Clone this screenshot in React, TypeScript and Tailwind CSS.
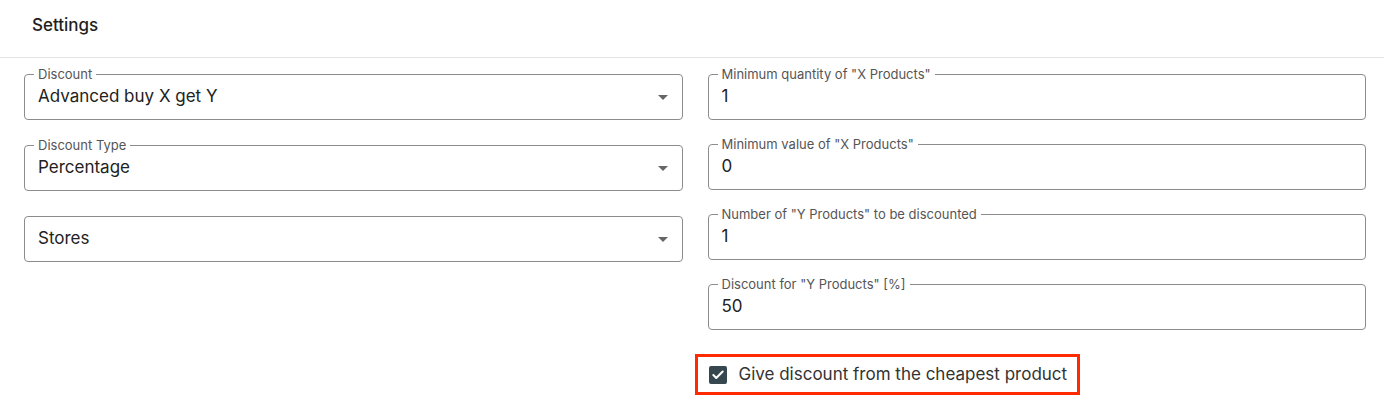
import { Check } from 'lucide-react';

const font = { fontFamily: 'Inter, "Noto Sans", sans-serif' };

function Field({ label, value, select }: { label?: string; value: string; select?: boolean }) {
  return (
    <div className="relative flex h-[46px] items-center justify-between rounded-[4px] border border-[#8c8c8c] px-[13px]">
      {label ? (
        <span className="absolute -top-[8px] left-[9px] bg-white px-[4px] text-[13px] leading-[14px] text-[#555]">
          {label}
        </span>
      ) : null}
      <span className="text-[17px] text-[#222]">{value}</span>
      {select ? (
        <span className="mr-[1px] h-0 w-0 border-x-[5px] border-t-[5px] border-x-transparent border-t-[#666]" />
      ) : null}
    </div>
  );
}

export default function App() {
  return (
    <div className="min-h-[411px] w-[1384px] bg-white" style={font}>
      <div className="flex h-[58px] items-center border-b border-[#e3e3e3] pl-[32px] pb-[6px]">
        <h2 className="text-[17px] font-medium text-[#1f1f1f]">Settings</h2>
      </div>
      <div className="grid grid-cols-2 gap-x-[25px] pl-[24px] pr-[18px] pt-[16px]">
        <div className="flex flex-col gap-[25px]">
          <Field label="Discount" value="Advanced buy X get Y" select />
          <Field label="Discount Type" value="Percentage" select />
          <Field value="Stores" select />
        </div>
        <div className="flex flex-col">
          <div className="flex flex-col gap-[24px]">
            <Field label='Minimum quantity of "X Products"' value="1" />
            <Field label='Minimum value of "X Products"' value="0" />
            <Field label='Number of "Y Products" to be discounted' value="1" />
            <Field label='Discount for "Y Products" [%]' value="50" />
          </div>
          <div className="mt-[24px] -ml-[13px] flex h-[41px] w-fit items-center gap-[12px] border-[3px] border-[#ff2a00] pl-[11px] pr-[10px]">
            <span className="flex h-[18px] w-[18px] items-center justify-center rounded-[2px] bg-[#37474f]">
              <Check size={14} strokeWidth={3.5} color="#fff" />
            </span>
            <span className="text-[17px] text-[#333]">Give discount from the cheapest product</span>
          </div>
        </div>
      </div>
    </div>
  );
}
